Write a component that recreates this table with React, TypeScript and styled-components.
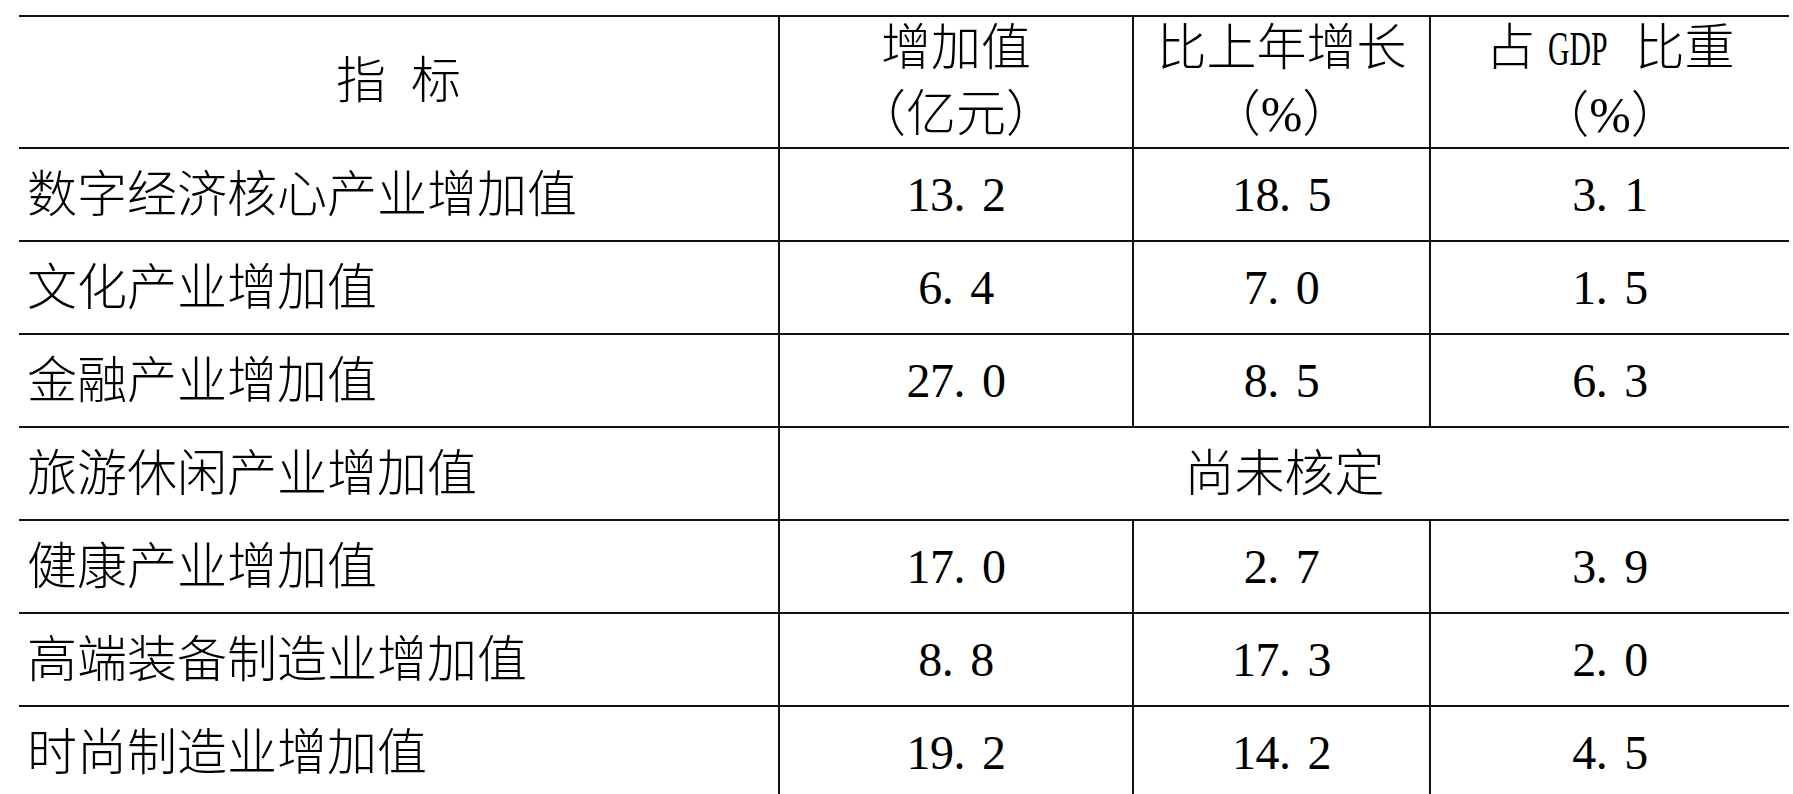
import React from "react";
import styled, { createGlobalStyle } from "styled-components";

const Global = createGlobalStyle`
  html, body { margin: 0; padding: 0; background: #fff; }
  body {
    font-family: "Liberation Serif", "Noto Sans CJK SC", serif;
    color: #000;
  }
`;

const Page = styled.main`
  box-sizing: border-box;
  height: 794px;
  overflow: hidden;
  padding: 15px 0 0 19px;
`;

const Table = styled.div`
  display: grid;
  width: 1770px;
  grid-template-columns: 759px 354px 297px 360px;
  grid-template-rows: 132px;
  grid-auto-rows: 93px;
  border-top: 2px solid #111;
`;

const Cell = styled.div<{ $first?: boolean; $left?: boolean; $span?: number }>`
  box-sizing: border-box;
  display: flex;
  align-items: center;
  justify-content: ${(p) => (p.$left ? "flex-start" : "center")};
  padding-left: ${(p) => (p.$left ? "8px" : "0")};
  border-bottom: 2px solid #111;
  border-left: ${(p) => (p.$first ? "none" : "2px solid #111")};
  grid-column: span ${(p) => p.$span ?? 1};
  font-size: 50px;
  font-weight: 300;
  line-height: 66px;
  white-space: nowrap;
`;

const HeadCell = styled(Cell)`
  flex-direction: column;
  justify-content: center;
  align-items: center;
  padding-bottom: 2px;
`;

const HeadLine = styled.span`
  display: block;
  line-height: 66px;
`;

const Narrow = styled.span<{ $w: number }>`
  display: inline-block;
  width: ${(p) => p.$w}px;
  margin: 0 14px 0 0;
  font-family: "Liberation Serif", serif;
  font-size: 48px;
  font-weight: 400;
  & > span {
    display: inline-block;
    transform: scaleX(0.62);
    transform-origin: left center;
  }
`;

const Num = styled.span`
  font-family: "Liberation Serif", serif;
  font-size: 48px;
  font-weight: 400;
  line-height: 66px;
  letter-spacing: -0.5px;
`;

const Dot = styled.span`
  margin-right: 17px;
`;

type Row = { name: string; values?: [string, string, string]; merged?: string };

const rows: Row[] = [
  { name: "数字经济核心产业增加值", values: ["13.2", "18.5", "3.1"] },
  { name: "文化产业增加值", values: ["6.4", "7.0", "1.5"] },
  { name: "金融产业增加值", values: ["27.0", "8.5", "6.3"] },
  { name: "旅游休闲产业增加值", merged: "尚未核定" },
  { name: "健康产业增加值", values: ["17.0", "2.7", "3.9"] },
  { name: "高端装备制造业增加值", values: ["8.8", "17.3", "2.0"] },
  { name: "时尚制造业增加值", values: ["19.2", "14.2", "4.5"] },
];

function Number({ v }: { v: string }) {
  const [a, b] = v.split(".");
  return (
    <Num>
      {a}
      <Dot>.</Dot>
      {b}
    </Num>
  );
}

export default function App() {
  return (
    <>
      <Global />
      <Page>
        <Table>
          <HeadCell $first>
            <HeadLine>指{"\u2002"}标</HeadLine>
          </HeadCell>
          <HeadCell>
            <HeadLine>增加值</HeadLine>
            <HeadLine>（亿元）</HeadLine>
          </HeadCell>
          <HeadCell>
            <HeadLine>比上年增长</HeadLine>
            <HeadLine>（%）</HeadLine>
          </HeadCell>
          <HeadCell>
            <HeadLine>
              占{" "}
              <Narrow $w={60}>
                <span>GDP</span>
              </Narrow>{" "}
              比重
            </HeadLine>
            <HeadLine>（%）</HeadLine>
          </HeadCell>
          {rows.map((r) => (
            <React.Fragment key={r.name}>
              <Cell $first $left>
                {r.name}
              </Cell>
              {r.merged ? (
                <Cell $span={3}>{r.merged}</Cell>
              ) : (
                r.values!.map((v, i) => (
                  <Cell key={i}>
                    <Number v={v} />
                  </Cell>
                ))
              )}
            </React.Fragment>
          ))}
        </Table>
      </Page>
    </>
  );
}
